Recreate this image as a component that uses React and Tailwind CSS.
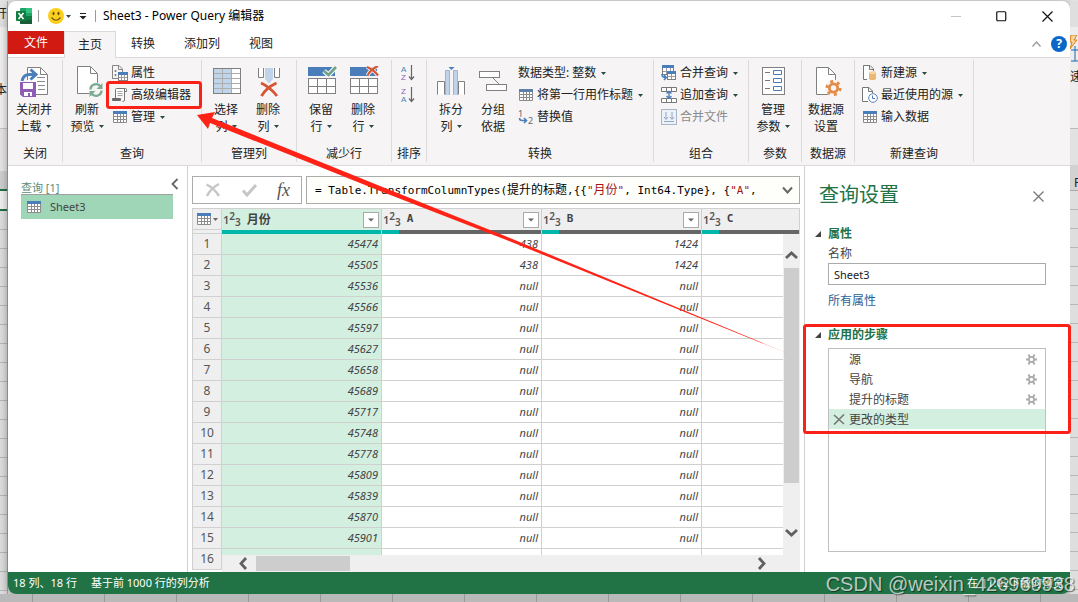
import React, { useState } from "react";

const MONTHS = [45474, 45505, 45536, 45566, 45597, 45627, 45658, 45689, 45717, 45748, 45778, 45809, 45839, 45870, 45901, 45931];
const ROWS = MONTHS.map((month, i) => ({
    id: i + 1,
    month,
    a: i < 2 ? "438" : "null",
    b: i < 2 ? "1424" : "null",
}));
const STEPS = ["源", "导航", "提升的标题", "更改的类型"];

function Caret({ className = "" }) {
    return (
        <svg width="5" height="3" viewBox="0 0 5 3" className={"inline-block shrink-0 " + className}>
            <path d="M0 0H5L2.5 3Z" fill="#2d4a40" />
        </svg>
    );
}

function Svg({ w = 32, h = 32, children }) {
    return (
        <svg width={w} height={h} viewBox={`0 0 ${w} ${h}`} fill="none" className="shrink-0" aria-hidden="true">
            {children}
        </svg>
    );
}

/* ---------- small icons ---------- */

function TableIcon({ head = "#4a7ebb" }) {
    return (
        <Svg w={14} h={14}>
            <rect x="1" y="1.5" width="12" height="11" fill="#fff" />
            <path d="M.5 1V12.5H13.5V1M4.5 4V12M7.5 4V12M10.5 4V12M1 6.5H13M1 9.5H13" stroke="#8c8c8c" />
            <rect x="0" y="1" width="14" height="3" fill={head} />
        </Svg>
    );
}

function PropsIcon() {
    return (
        <Svg w={16} h={16}>
            <path d="M.5 14V.5H7L10.5 4V7M.5 13.5H6M6.5 .5V4.5H10.5" stroke="#868686" />
            <circle cx="3.5" cy="6" r="1" fill="#777" />
            <circle cx="3.5" cy="10" r="1" fill="#777" />
            <rect x="6.5" y="8.5" width="9" height="7" fill="#fff" stroke="#808080" />
            <path d="M9.5 10V15M12.5 10V15M7 12.5H15" stroke="#9a9a9a" />
            <rect x="6" y="7" width="10" height="3" fill="#4a7ebb" />
        </Svg>
    );
}

function ScrollIcon() {
    return (
        <Svg w={16} h={16}>
            <path d="M3.500 11V2.500Q3.500 1.500 4.500 1.500H13.500Q14.500 1.500 14.500 2.500V4.500H12.500M12.500 2V13Q12.500 14.500 10.500 14.500" fill="#fff" stroke="#777" />
            <path d="M5.500 4.500H10.500M5.500 6.500H10.500M5.500 8.500H10.500" stroke="#a5a5a5" />
            <rect x="0" y="11" width="9" height="3" rx="1" fill="#6a6a6a" />
        </Svg>
    );
}

function ReplaceIcon() {
    return (
        <Svg w={16} h={16}>
            <text x="0" y="8" fontSize="9" fill="#666" fontFamily="Noto Sans">1</text>
            <text x="10" y="15" fontSize="9" fill="#666" fontFamily="Noto Sans">2</text>
            <path d="M1.500 9Q1.500 11.500 4 11.500H7.500M6 9L8.500 11.500L6 14" stroke="#4a7ebb" strokeWidth="1.600" />
        </Svg>
    );
}

function MergeIcon() {
    return (
        <Svg w={16} h={16}>
            <rect x="1.500" y="1.500" width="11" height="8" fill="#fff" stroke="#808080" />
            <path d="M5.500 3V9M9.500 3V9M2 6.500H12" stroke="#9a9a9a" />
            <rect x="1" y="0" width="12" height="3" fill="#4a7ebb" />
            <rect x="6.500" y="7.500" width="8" height="7" fill="#fff" stroke="#808080" />
            <path d="M10.500 9V14M7 11.500H14" stroke="#9a9a9a" />
            <rect x="6" y="6" width="9" height="3" fill="#4a7ebb" />
            <path d="M.8 9Q1 12.500 4.500 12.500M3 10L5.300 12.500L3 15" stroke="#4a7ebb" strokeWidth="1.500" />
        </Svg>
    );
}

function AppendIcon() {
    return (
        <Svg w={16} h={16}>
            <path d="M.5 .5H15.500V4.500H.5ZM5.500 1V4M10.500 1V4M.5 11.500H15.500V15.500H.5ZM5.500 12V15M10.500 12V15" fill="#fff" stroke="#777" />
            <path d="M8 4V12M5.500 6.500L8 4.500L10.500 6.500M5.500 9L8 11.500L10.500 9" stroke="#4a7ebb" strokeWidth="1.400" />
        </Svg>
    );
}

function CombineIcon() {
    return (
        <Svg w={16} h={16}>
            <rect x=".5" y=".5" width="15" height="15" fill="#edf1f8" stroke="#a9b5c6" />
            <path d="M5 3V10M3 8L5 10.500L7 8M11 3V10M9 8L11 10.500L13 8M3 12.500H13" stroke="#94a7c2" />
        </Svg>
    );
}

function NewSourceIcon() {
    return (
        <Svg w={16} h={16}>
            <path d="M5 14.500H1.500V.5H8L11.500 4V6M7.500 .5V4.500H11.500" fill="#fff" stroke="#777" />
            <path d="M7 7.500V13.500C7 15.500 14 15.500 14 13.500V7.500Z" fill="#e9b872" />
            <ellipse cx="10.500" cy="7.500" rx="3.500" ry="1.500" fill="#f6d7a5" />
        </Svg>
    );
}

function RecentIcon() {
    return (
        <Svg w={16} h={16}>
            <path d="M6 14.500H.5V.5H7L10.500 4V6M6.500 .5V4.500H10.500" fill="#fff" stroke="#777" />
            <circle cx="11" cy="11" r="4.300" fill="#fff" stroke="#5b83b8" />
            <path d="M10.500 8.500V11.500H13" stroke="#4a7ebb" />
        </Svg>
    );
}

function SortIcon({ top, bottom, topColor, bottomColor }) {
    return (
        <Svg w={16} h={18}>
            <text x="1" y="8" fontSize="8" fill={topColor} fontFamily="Liberation Sans">{top}</text>
            <text x="1" y="16" fontSize="8" fill={bottomColor} fontFamily="Liberation Sans">{bottom}</text>
            <path d="M11.500 1V15M9 12.500L11.500 15.500L14 12.500" stroke="#666" strokeWidth="1.200" />
        </Svg>
    );
}

/* ---------- large ribbon icons ---------- */

function CloseLoadIcon() {
    return (
        <Svg>
            <path d="M9.500 14V1.500H22.500L29.500 8.500V28.500H17" fill="#fff" stroke="#808080" />
            <path d="M22.500 2V8.500H29" stroke="#808080" />
            <path d="M19 11.500H27M19 15.500H27M20 19.500H27M20 23.500H27" stroke="#8c8c8c" />
            <path d="M4 15Q5 8.500 12 8.500H16M12.500 3.500L18 8.500L12.500 13.500" stroke="#4a7ebb" strokeWidth="3" />
            <path d="M2 16H18V31H5L2 28.500Z" fill="#8f5bb5" />
            <rect x="5" y="17" width="10" height="6" fill="#fff" />
            <rect x="6" y="26" width="8" height="4" fill="#fff" />
            <rect x="10" y="27" width="2" height="3" fill="#8f5bb5" />
        </Svg>
    );
}

function RefreshIcon() {
    return (
        <Svg>
            <path d="M6.500 .5H19.500L26.500 7.500V27.500H6.500Z" fill="#fff" stroke="#808080" />
            <path d="M19.500 1V7.500H26" stroke="#808080" />
            <circle cx="25" cy="24" r="7.500" fill="#f6f4f5" />
            <path d="M19.500 23.500A5.500 5.500 0 0 1 29.500 20.500M30.500 24.500A5.500 5.500 0 0 1 20.500 27.500" stroke="#7cab93" strokeWidth="2.400" />
            <path d="M31.500 17V23H25.500ZM18.500 31V25H24.500Z" fill="#7cab93" />
        </Svg>
    );
}

function ChooseColumnsIcon() {
    return (
        <Svg>
            <rect x="3.500" y="2.500" width="27" height="25" fill="#fff" />
            <rect x="3" y="2" width="19" height="25" fill="#c0d4ea" />
            <path d="M12.500 3V27M21.500 3V27M4 7.500H30M4 12.500H30M4 17.500H30M4 22.500H30" stroke="#adadad" />
            <rect x="3.500" y="2.500" width="27" height="25" stroke="#808080" />
        </Svg>
    );
}

function RemoveColumnsIcon() {
    return (
        <Svg>
            <path d="M6.500 2V11.500H11.500V2M22.500 2V11.500H27.500V2" fill="#fff" stroke="#808080" />
            <path d="M13 2H21V13L17 17.500L13 13Z" fill="#bfd3ea" />
            <path d="M9 17Q18 21 25 30M24.500 17Q14 22 9.500 30" stroke="#d65532" strokeWidth="2.800" />
        </Svg>
    );
}

function RowsIcon({ remove }) {
    return (
        <Svg>
            <rect x="3" y="1" width="27" height="9" fill="#4a7ebb" />
            <rect x="3.500" y="12.500" width="27" height="15" fill="#fff" stroke="#808080" />
            <path d="M12.500 13V27M21.500 13V27M4 20.500H30" stroke="#808080" />
            {remove ? (
                <>
                    <path d="M20 1Q27 4 31 9.500M31 0Q24 3 20.500 9.500" stroke="#f6f4f5" strokeWidth="4" />
                    <path d="M20 1Q27 4 31 9.500M31 0Q24 3 20.500 9.500" stroke="#d65532" strokeWidth="2.200" />
                </>
            ) : (
                <>
                    <path d="M19 5L23.500 9L31 1" stroke="#f6f4f5" strokeWidth="5" />
                    <path d="M19 5L23.500 9L31 1" stroke="#6fa287" strokeWidth="2.600" />
                </>
            )}
        </Svg>
    );
}

function SplitIcon() {
    return (
        <Svg>
            <path d="M2.500 28.500V15.500H9.500V28.500M23.500 28.500V15.500H29.500V28.500" fill="#fff" stroke="#808080" />
            <rect x="10.500" y="4" width="4" height="25" fill="#bfd3ea" />
            <rect x="18.500" y="4" width="4" height="25" fill="#bfd3ea" />
            <path d="M10.500 29V4.500H14.500V29M18.500 29V4.500H22.500V29" stroke="#a3b4c8" />
            <path d="M13.500 1H19.500L16.500 4Z" fill="#4a7ebb" />
        </Svg>
    );
}

function GroupByIcon() {
    return (
        <Svg>
            <path d="M16 12L23 19" stroke="#808080" />
            <rect x="2.500" y="5.500" width="20" height="6" fill="#fff" stroke="#808080" />
            <rect x="9.500" y="18.500" width="20" height="6" fill="#fff" stroke="#808080" />
        </Svg>
    );
}

function ParamsIcon() {
    return (
        <Svg>
            <rect x="5.500" y="1.500" width="22" height="27" fill="#fff" stroke="#808080" />
            <path d="M8 6.500H13M8 14.500H13M8 22.500H13" stroke="#777" />
            <path d="M16.500 4.500H24.500V8.500H16.500ZM16.500 12.500H24.500V16.500H16.500ZM16.500 20.500H24.500V24.500H16.500Z" stroke="#4a7ebb" />
        </Svg>
    );
}

function SourceSettingsIcon() {
    return (
        <Svg>
            <path d="M6.500 1.500H18.500L25.500 8.500V28.500H6.500Z" fill="#fff" stroke="#808080" />
            <path d="M18.500 2V8.500H25" stroke="#808080" />
            <circle cx="23.500" cy="22" r="8.500" fill="#f6f4f5" />
            <circle cx="23.500" cy="22" r="4.200" stroke="#e48b45" strokeWidth="2.800" />
            <circle cx="23.500" cy="22" r="6.600" stroke="#e48b45" strokeWidth="2.800" strokeDasharray="2.900 4.011" />
        </Svg>
    );
}

function StepGear() {
    return (
        <svg width="11" height="11" viewBox="0 0 11 11" fill="none" aria-hidden="true">
            <circle cx="5.500" cy="5.500" r="2.600" stroke="#aaa" strokeWidth="1.600" />
            <path d="M0 5.500H3M8 5.500H11M2.500 .5L4 3.500M8.500 .5L7 3.500M2.500 10.500L4 7.500M8.500 10.500L7 7.500" stroke="#aaa" strokeWidth="1.800" />
        </svg>
    );
}

/* ---------- ribbon pieces ---------- */

function Group({ label, width, pad = "", children }) {
    return (
        <div className={"flex h-[102px] shrink-0 flex-col justify-between border-r border-[#dcdadb] " + width}>
            <div className={"flex items-start " + pad}>{children}</div>
            <div className="text-center leading-4">{label}</div>
        </div>
    );
}

function BigButton({ icon, lines, menu, width = "w-[42px]" }) {
    return (
        <button className={"flex shrink-0 flex-col items-center pt-1.5 leading-[17px] " + width}>
            {icon}
            <span className="mt-[3px] whitespace-nowrap">{lines[0]}</span>
            <span className="flex items-center whitespace-nowrap">{lines[1]}{menu && <Caret className="ml-1" />}</span>
        </button>
    );
}

function SmallButton({ icon, label, menu, disabled }) {
    return (
        <button disabled={disabled} className="flex h-[22px] items-center whitespace-nowrap disabled:text-[#8a8a8a]">
            {icon && <span className="mr-[3px] flex w-4 justify-center">{icon}</span>}
            {label}
            {menu && <Caret className="ml-[5px]" />}
        </button>
    );
}

function Ribbon() {
    return (
        <div className="flex h-[108px] shrink-0 items-start overflow-hidden border-b border-[#dadada] bg-[#f6f4f5] pt-0.5">
            <Group label="关闭" width="w-[55px]">
                <BigButton icon={<CloseLoadIcon />} lines={["关闭并", "上载"]} menu width="w-[52px]" />
            </Group>
            <Group label="查询" width="w-[139px]" pad="pl-[3px]">
                <BigButton icon={<RefreshIcon />} lines={["刷新", "预览"]} menu />
                <div className="flex flex-col items-start pl-1 pt-0.5">
                    <SmallButton icon={<PropsIcon />} label="属性" />
                    <SmallButton icon={<ScrollIcon />} label="高级编辑器" />
                    <SmallButton icon={<TableIcon />} label="管理" menu />
                </div>
            </Group>
            <Group label="管理列" width="w-[95px]" pad="pl-[3px]">
                <BigButton icon={<ChooseColumnsIcon />} lines={["选择", "列"]} menu />
                <BigButton icon={<RemoveColumnsIcon />} lines={["删除", "列"]} menu />
            </Group>
            <Group label="减少行" width="w-[95px]" pad="pl-[3px]">
                <BigButton icon={<RowsIcon />} lines={["保留", "行"]} menu />
                <BigButton icon={<RowsIcon remove />} lines={["删除", "行"]} menu />
            </Group>
            <Group label="排序" width="w-[35px]" pad="pl-2">
                <div className="flex flex-col gap-1 pt-1">
                    <button aria-label="升序排序"><SortIcon top="A" bottom="Z" topColor="#4a7ebb" bottomColor="#8f5bb5" /></button>
                    <button aria-label="降序排序"><SortIcon top="Z" bottom="A" topColor="#8f5bb5" bottomColor="#4a7ebb" /></button>
                </div>
            </Group>
            <Group label="转换" width="w-[227px]" pad="pl-[3px]">
                <BigButton icon={<SplitIcon />} lines={["拆分", "列"]} menu />
                <BigButton icon={<GroupByIcon />} lines={["分组", "依据"]} />
                <div className="flex flex-col items-start pl-1 pt-0.5">
                    <SmallButton label="数据类型: 整数" menu />
                    <SmallButton icon={<TableIcon head="#5d7fa8" />} label="将第一行用作标题" menu />
                    <SmallButton icon={<ReplaceIcon />} label="替换值" />
                </div>
            </Group>
            <Group label="组合" width="w-[95px]" pad="pl-[7px]">
                <div className="flex flex-col items-start pt-0.5">
                    <SmallButton icon={<MergeIcon />} label="合并查询" menu />
                    <SmallButton icon={<AppendIcon />} label="追加查询" menu />
                    <SmallButton icon={<CombineIcon />} label="合并文件" disabled />
                </div>
            </Group>
            <Group label="参数" width="w-[53px]">
                <BigButton icon={<ParamsIcon />} lines={["管理", "参数"]} menu width="w-12" />
            </Group>
            <Group label="数据源" width="w-[53px]">
                <BigButton icon={<SourceSettingsIcon />} lines={["数据源", "设置"]} width="w-12" />
            </Group>
            <Group label="新建查询" width="w-[119px]" pad="pl-[7px]">
                <div className="flex flex-col items-start pt-0.5">
                    <SmallButton icon={<NewSourceIcon />} label="新建源" menu />
                    <SmallButton icon={<RecentIcon />} label="最近使用的源" menu />
                    <SmallButton icon={<TableIcon />} label="输入数据" />
                </div>
            </Group>
        </div>
    );
}

function TitleBar() {
    return (
        <header className="flex h-[30px] shrink-0 items-center pl-2 pr-[17px]">
            <Svg w={16} h={18}>
                <rect x="4" y="1" width="12" height="16" rx="1" fill="#21a366" />
                <rect x="10" y="1" width="6" height="5" fill="#33c481" />
                <rect x="10" y="9" width="6" height="4" fill="#107c41" />
                <path d="M4 9H10V17H5Q4 17 4 16Z" fill="#185c37" />
                <rect x="10" y="13" width="6" height="4" fill="#185c37" />
                <rect x="0" y="4" width="10" height="10" rx="1" fill="#107c41" />
                <path d="M2.500 6L7.500 12M7.500 6L2.500 12" stroke="#fff" strokeWidth="1.600" />
            </Svg>
            <span className="ml-1.5 h-3 w-px bg-[#9b9b9b]" />
            <button aria-label="反馈" className="ml-[9px] flex items-center">
                <Svg w={16} h={16}>
                    <circle cx="8" cy="8" r="8" fill="#fbcf1c" />
                    <ellipse cx="5.500" cy="5.500" rx="1" ry="1.800" fill="#5b4a12" />
                    <ellipse cx="10.500" cy="5.500" rx="1" ry="1.800" fill="#5b4a12" />
                    <path d="M3.500 9.500Q8 15 12.500 9.500" stroke="#6d5613" strokeWidth="1.200" />
                </Svg>
                <Caret className="ml-0.5" />
            </button>
            <button aria-label="自定义快速访问工具栏" className="ml-2">
                <Svg w={8} h={8}>
                    <path d="M1 1.500H7" stroke="#222" />
                    <path d="M.5 4H7.500L4 7.500Z" fill="#222" />
                </Svg>
            </button>
            <span className="ml-2 h-3 w-px bg-[#9b9b9b]" />
            <h1 className="ml-[7px] whitespace-nowrap text-black">Sheet3 - Power Query 编辑器</h1>
            <div className="ml-auto flex items-center gap-[35px]">
                <button aria-label="最小化">
                    <Svg w={10} h={10}><path d="M0 5.500H10" stroke="#c4c4c4" /></Svg>
                </button>
                <button aria-label="最大化">
                    <Svg w={11} h={11}><rect x=".75" y=".75" width="9" height="9" rx="1" stroke="#111" strokeWidth="1.200" /></Svg>
                </button>
                <button aria-label="关闭">
                    <Svg w={11} h={11}><path d="M.5 .5L10.500 10.500M10.500 .5L.5 10.500" stroke="#111" strokeWidth="1.200" /></Svg>
                </button>
            </div>
        </header>
    );
}

function TabBar() {
    return (
        <nav className="flex h-[27px] shrink-0 items-start border-b border-[#dadada] leading-6">
            <button className="h-[23px] w-14 bg-[#d01a12] leading-6 text-white">文件</button>
            <button className="h-[27px] w-[52px] border border-b-0 border-[#dadada] bg-[#f6f4f5] leading-6">主页</button>
            <div className="ml-px flex gap-px">
                <button className="px-3.5 leading-[26px]">转换</button>
                <button className="px-3.5 leading-[26px]">添加列</button>
                <button className="px-3.5 leading-[26px]">视图</button>
            </div>
            <div className="ml-auto flex items-center gap-2.5 pt-[5px] pr-[3px]">
                <button aria-label="折叠功能区">
                    <Svg w={9} h={6}><path d="M.5 5.500L4.500 1L8.500 5.500" stroke="#9a9a9a" strokeWidth="1.300" /></Svg>
                </button>
                <button aria-label="帮助" className="flex size-4 items-center justify-center rounded-full bg-[#0b68c8] font-bold leading-4 text-white">?</button>
            </div>
        </nav>
    );
}

function TypeBadge() {
    return (
        <span className="text-[11px] leading-4 font-semibold text-[#555]">
            1<sup className="-top-1 text-[10px]">2</sup><sub className="-bottom-0.5 text-[10px]">3</sub>
        </span>
    );
}

function ColumnHead({ name, selected, filter = true }) {
    return (
        <th scope="col" className={"border-r border-[#d0d0d0] p-0 text-left " + (selected ? "bg-[#d3efe0]" : "bg-[#efefef]")}>
            <div className="flex h-[21px] items-center pl-px pr-0.5">
                <TypeBadge />
                <span className={"ml-1.5 font-bold text-[#444] " + (selected ? "" : "font-['DejaVu_Sans_Mono'] text-[11px]")}>{name}</span>
                {filter && (
                    <button aria-label={name + " 筛选"} className="ml-auto flex size-4 items-center justify-center border border-[#a9a9a9] bg-white">
                        <Svg w={6} h={4}><path d="M0 .5H6L3 3.500Z" fill="#666" /></Svg>
                    </button>
                )}
            </div>
            <div className={"h-1 " + (selected ? "bg-[#00b8a9]" : "bg-[#666]")}>
                <div className="h-1 w-[17px] bg-[#00b8a9]" />
            </div>
        </th>
    );
}

function DataGrid() {
    return (
        <div className="relative mx-1 mt-1 min-h-0 flex-1 overflow-hidden">
            <table className="w-full table-fixed border-separate border-spacing-0 border-l border-t border-[#d0d0d0]">
                <colgroup>
                    <col className="w-[29px]" />
                    <col className="w-[160px]" />
                    <col className="w-[160px]" />
                    <col className="w-[160px]" />
                    <col />
                </colgroup>
                <thead>
                    <tr>
                        <th className="border-r border-[#d0d0d0] bg-[#efefef] p-0">
                            <div className="flex h-[21px] items-center justify-center gap-0.5 border-b border-[#d0d0d0]">
                                <TableIcon />
                                <Svg w={5} h={3}><path d="M0 0H5L2.500 3Z" fill="#666" /></Svg>
                            </div>
                            <div className="h-1 border-b border-[#d0d0d0]" />
                        </th>
                        <ColumnHead name="月份" selected />
                        <ColumnHead name="A" />
                        <ColumnHead name="B" />
                        <ColumnHead name="C" filter={false} />
                    </tr>
                </thead>
                <tbody className="text-[11px] text-[#444]">
                    {ROWS.map(({ id, month, a, b }) => {
                        return (
                            <tr key={id} className="h-[21px] italic leading-5">
                                <th scope="row" className="border-b border-r border-[#d0d0d0] bg-[#efefef] p-0 text-center text-xs leading-5 font-normal not-italic text-[#555]">{id}</th>
                                <td className="border-b border-r border-[#d0d0d0] bg-[#d3efe0] py-0 pl-0 pr-[3px] text-right">{month}</td>
                                <td className="border-b border-r border-[#d0d0d0] py-0 pl-0 pr-[3px] text-right">{a}</td>
                                <td className="border-b border-r border-[#d0d0d0] py-0 pl-0 pr-[3px] text-right">{b}</td>
                                <td className="border-b border-[#d0d0d0] p-0" />
                            </tr>
                        );
                    })}
                </tbody>
            </table>

            {/* scrollbars float over the grid */}
            <div className="absolute bottom-0 right-0 top-[26px] flex w-[17px] flex-col items-center bg-[#efefef] pb-[34px] pt-4">
                <Svg w={13} h={10}><path d="M1 8L6.500 3L12 8" stroke="#606060" strokeWidth="2.800" /></Svg>
                <div className="mt-2 h-[215px] w-[15px] bg-[#cdcdcd]" />
                <div className="mt-auto"><Svg w={13} h={10}><path d="M1 2L6.500 7L12 2" stroke="#606060" strokeWidth="2.800" /></Svg></div>
            </div>
            <div className="absolute bottom-0 left-[30px] right-[17px] flex h-[17px] items-center bg-[#efefef] pl-4 pr-4">
                <Svg w={10} h={13}><path d="M8 1L3 6.500L8 12" stroke="#606060" strokeWidth="2.800" /></Svg>
                <div className="ml-2 h-[15px] w-[94px] bg-[#cdcdcd]" />
                <div className="ml-auto"><Svg w={10} h={13}><path d="M2 1L7 6.500L2 12" stroke="#606060" strokeWidth="2.800" /></Svg></div>
            </div>
        </div>
    );
}

function FormulaBar() {
    return (
        <div className="mx-1 mt-2.5 flex h-7 shrink-0 gap-1">
            <div className="flex w-[110px] items-center justify-between border border-[#ababab] pl-3 pr-[11px]">
                <button aria-label="取消">
                    <Svg w={16} h={14}><path d="M1.500 1.500Q9 5 14 13M14 1Q6 5 2 13" stroke="#c6c6c6" strokeWidth="2.400" /></Svg>
                </button>
                <button aria-label="确认">
                    <Svg w={15} h={13}><path d="M1 6.500L5 11L14 1" stroke="#c6c6c6" strokeWidth="3" /></Svg>
                </button>
                <span className="font-['Liberation_Serif'] text-lg leading-5 italic text-[#555]">fx</span>
            </div>
            <div className="flex min-w-0 flex-1 items-center justify-between border border-[#ababab] bg-[#fefefb] pl-2 pr-1.5">
                <code className="overflow-hidden whitespace-pre font-['DejaVu_Sans_Mono','Noto_Sans_CJK_SC',monospace] text-[11px] text-black">
                    = Table.TransformColumnTypes(<span className="text-xs">提升的标题</span>,{"{{"}
                    <span className="text-[#a31515]">"<span className="text-xs">月份</span>"</span>, Int64.Type{"}"}, {"{"}
                    <span className="text-[#a31515]">"A"</span>,
                </code>
                <button aria-label="展开编辑栏">
                    <Svg w={11} h={8}><path d="M1 1.500L5.500 6.500L10 1.500" stroke="#666" strokeWidth="2" /></Svg>
                </button>
            </div>
        </div>
    );
}

function QueryPane() {
    return (
        <aside className="w-[180px] shrink-0 border-r border-[#d0d0d0] pl-[13px] pr-3.5">
            <div className="flex h-[29px] items-end justify-between border-b border-[#9f9f9f] text-[11px] leading-3 text-[#5e8c78]">
                <span>查询 [1]</span>
                <button aria-label="折叠窗格" className="-mr-1.5 pb-1">
                    <Svg w={8} h={12}><path d="M6.500 1L1.500 6L6.500 11" stroke="#666" strokeWidth="1.800" /></Svg>
                </button>
            </div>
            <button className="flex h-6 w-full items-center gap-[9px] bg-[#9fd6b8] pl-1.5 text-[11px] text-[#444]">
                <TableIcon />
                Sheet3
            </button>
        </aside>
    );
}

function SectionHead({ children }) {
    return (
        <h3 className="flex items-center font-bold leading-5 text-[#217346]">
            <svg width="6" height="6" viewBox="0 0 6 6" className="mr-[7px]"><path d="M6 0V6H0Z" fill="#444" /></svg>
            {children}
        </h3>
    );
}

function SettingsPane() {
    const [name, setName] = useState("Sheet3");
    const [selected, setSelected] = useState(3);
    return (
        <aside className="flex w-[266px] shrink-0 flex-col border-l border-[#d0d0d0] pb-5 pl-2.5 pr-6 text-[#444]">
            <div className="flex items-center justify-between pl-1 pt-[13px]">
                <h2 className="text-xl leading-8 text-[#217346]">查询设置</h2>
                <button aria-label="关闭" className="pt-0.5 pr-0.5">
                    <Svg w={11} h={11}><path d="M.5 .5L10.500 10.500M10.500 .5L.5 10.500" stroke="#777" strokeWidth="1.300" /></Svg>
                </button>
            </div>
            <div className="mt-[13px]"><SectionHead>属性</SectionHead></div>
            <div className="flex flex-col items-start pl-[13px]">
                <label htmlFor="query-name" className="leading-[19px]">名称</label>
                <input
                    id="query-name"
                    value={name}
                    onChange={(e) => setName(e.target.value)}
                    className="h-[22px] w-full border border-[#ababab] bg-white px-[5px] text-[11px] text-[#222] outline-none"
                />
                <a href="#properties" className="mt-1.5 leading-5 text-[#2b6299]">所有属性</a>
            </div>
            <div className="mt-3.5"><SectionHead>应用的步骤</SectionHead></div>
            <ul className="ml-[13px] mt-[3px] min-h-0 flex-1 border border-[#c0c0c0]">
                {STEPS.map((step, i) => {
                    return (
                        <li key={step} className={"flex h-5 items-center pr-2 " + (i === selected ? "bg-[#d3efe0]" : "")}>
                            <span className="flex w-5 justify-center">
                                {i === selected && (
                                    <Svg w={12} h={11}><path d="M1 1L11 10M11 .5L1 10.500" stroke="#777" strokeWidth="1.600" /></Svg>
                                )}
                            </span>
                            <button onClick={() => setSelected(i)} className="flex-1 pt-px text-left">{step}</button>
                            {i < 3 && <StepGear />}
                        </li>
                    );
                })}
            </ul>
        </aside>
    );
}

/* red marks drawn over the window: two boxes and a tapering arrow */
function Annotations() {
    return (
        <svg className="pointer-events-none absolute left-0 top-0" width="1078" height="602" viewBox="0 0 1078 602" fill="none" aria-hidden="true">
            <rect x="107.500" y="82.500" width="93" height="25" rx="2" stroke="#fb2018" strokeWidth="3" />
            <rect x="804.500" y="325.500" width="265" height="107" rx="2" stroke="#fb2018" strokeWidth="3" />
            <path d="M197 115L215 112L212 118L380 186L510 238L789 354L509 241L380 191L210 123L208 129Z" fill="#ff2317" />
        </svg>
    );
}

export default function App() {
    return (
        <div className="relative flex h-screen flex-col overflow-hidden bg-[#e3e3e3] font-['Noto_Sans','Noto_Sans_CJK_SC',sans-serif] text-xs text-[#222]">
            <div className="flex min-h-0 flex-1 pt-px">
                {/* edge of the workbook behind the window */}
                <div className="flex w-2 shrink-0 flex-col overflow-hidden border-r border-[#aaa]">
                    <div className="flex h-[26px] items-center justify-end whitespace-nowrap bg-[#e2e2e2]">开</div>
                    <div className="flex h-[102px] items-center justify-end whitespace-nowrap border-b border-[#c4c4c4] bg-[#f0f0f0] pt-6">本</div>
                    <div className="h-[42px] bg-[#e6e6e6]" />
                    <div className="h-5 border-b-2 border-[#217346] bg-[#cfcfcf]" />
                    <div className="h-5 border-b-2 border-[#217346] bg-[#f0f0f0]" />
                    <div className="flex-1 bg-[repeating-linear-gradient(to_bottom,#dedede_0_18px,#b8b8b8_18px_19px)]" />
                </div>

                <main className="flex min-w-0 flex-1 flex-col overflow-hidden rounded-lg bg-white shadow-[0_2px_10px_rgba(0,0,0,0.4)]">
                    <TitleBar />
                    <TabBar />
                    <Ribbon />
                    <div className="flex min-h-0 flex-1">
                        <QueryPane />
                        <section className="flex min-w-0 flex-1 flex-col">
                            <FormulaBar />
                            <DataGrid />
                        </section>
                        <SettingsPane />
                    </div>
                    <footer className="flex h-[22px] shrink-0 items-center gap-3.5 bg-[#217346] pl-[5px] pr-1.5 text-[11px] text-white">
                        <span>18 列、18 行</span>
                        <span>基于前 1000 行的列分析</span>
                        <span className="ml-auto">在 11:02下载的预览</span>
                    </footer>
                </main>

                <div className="flex w-2 shrink-0 flex-col overflow-hidden">
                    <div className="h-[26px] bg-[#dfdfdf]" />
                    <div className="flex h-[102px] flex-col border-b border-[#bbb] bg-[#ededed] pt-2">
                        <svg width="8" height="28" viewBox="0 0 8 28" fill="none" className="shrink-0">
                            <path d="M1 0H7L4 5H7L0 14L2 7H0Z" fill="#f7d79b" stroke="#d9821f" />
                            <path d="M1 15H8M1 26H8M5 11V26" stroke="#1b68ad" />
                        </svg>
                        <span className="mt-1.5">速</span>
                    </div>
                    <div className="h-9 bg-[#e2e2e2]" />
                    <div className="h-[26px] whitespace-nowrap border-b border-[#aaa] bg-[#d2d2d2] pl-1 leading-9">P</div>
                    <div className="flex-1 bg-[repeating-linear-gradient(to_bottom,#dedede_0_18px,#b8b8b8_18px_19px)]" />
                </div>
            </div>
            <div className="h-2 shrink-0 bg-[repeating-linear-gradient(to_right,#b9b9b9_0_32px,#999_32px_33px,#b9b9b9_33px_72px)]" />

            <Annotations />
            <div className="pointer-events-none absolute bottom-1 right-[3px] whitespace-nowrap font-['Liberation_Sans'] text-xl leading-7 text-white/70 [text-shadow:1px_1px_1px_rgba(0,0,0,0.5)]">
                CSDN @weixin_426969938
            </div>
        </div>
    );
}
